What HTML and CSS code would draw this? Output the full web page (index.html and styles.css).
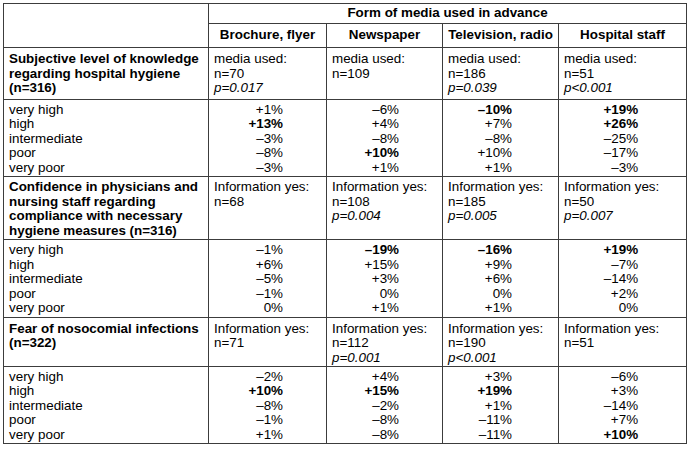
FILE: index.html
```html
<!DOCTYPE html>
<html lang="en">
<head>
<meta charset="utf-8">
<title>Form of media used in advance</title>
<link rel="stylesheet" href="styles.css">
</head>
<body>
<table class="grid">
  <colgroup>
    <col class="col-label">
    <col class="col-a">
    <col class="col-b">
    <col class="col-c">
    <col class="col-d">
  </colgroup>
  <thead>
    <tr class="head-1">
      <th rowspan="2" class="corner"></th>
      <th colspan="4" class="group">Form of media used in advance</th>
    </tr>
    <tr class="head-2">
      <th>Brochure, flyer</th>
      <th>Newspaper</th>
      <th>Television, radio</th>
      <th>Hospital staff</th>
    </tr>
  </thead>
  <tbody>
    <tr class="sec sec-1">
      <th class="q">Subjective level of knowledge<br>regarding hospital hygiene<br>(n=316)</th>
      <td>media used:<br>n=70<br><i>p=0.017</i></td>
      <td>media used:<br>n=109</td>
      <td>media used:<br>n=186<br><i>p=0.039</i></td>
      <td>media used:<br>n=51<br><i>p&lt;0.001</i></td>
    </tr>
    <tr class="data">
      <td class="lbl">very high<br>high<br>intermediate<br>poor<br>very poor</td>
      <td class="val">+1%<br><b>+13%</b><br>–3%<br>–8%<br>–3%</td>
      <td class="val">–6%<br>+4%<br>–8%<br><b>+10%</b><br>+1%</td>
      <td class="val"><b>–10%</b><br>+7%<br>–8%<br>+10%<br>+1%</td>
      <td class="val"><b>+19%</b><br><b>+26%</b><br>–25%<br>–17%<br>–3%</td>
    </tr>
    <tr class="sec sec-2">
      <th class="q">Confidence in physicians and<br>nursing staff regarding<br>compliance with necessary<br>hygiene measures (n=316)</th>
      <td>Information yes:<br>n=68</td>
      <td>Information yes:<br>n=108<br><i>p=0.004</i></td>
      <td>Information yes:<br>n=185<br><i>p=0.005</i></td>
      <td>Information yes:<br>n=50<br><i>p=0.007</i></td>
    </tr>
    <tr class="data data-2">
      <td class="lbl">very high<br>high<br>intermediate<br>poor<br>very poor</td>
      <td class="val">–1%<br>+6%<br>–5%<br>–1%<br>0%</td>
      <td class="val"><b>–19%</b><br>+15%<br>+3%<br>0%<br>+1%</td>
      <td class="val"><b>–16%</b><br>+9%<br>+6%<br>0%<br>+1%</td>
      <td class="val"><b>+19%</b><br>–7%<br>–14%<br>+2%<br>0%</td>
    </tr>
    <tr class="sec sec-3">
      <th class="q">Fear of nosocomial infections<br>(n=322)</th>
      <td>Information yes:<br>n=71</td>
      <td>Information yes:<br>n=112<br><i>p=0.001</i></td>
      <td>Information yes:<br>n=190<br><i>p&lt;0.001</i></td>
      <td>Information yes:<br>n=51</td>
    </tr>
    <tr class="data">
      <td class="lbl">very high<br>high<br>intermediate<br>poor<br>very poor</td>
      <td class="val">–2%<br><b>+10%</b><br>–8%<br>–1%<br>+1%</td>
      <td class="val">+4%<br><b>+15%</b><br>–2%<br>–8%<br>–8%</td>
      <td class="val">+3%<br><b>+19%</b><br>+1%<br>–11%<br>–11%</td>
      <td class="val">–6%<br>+3%<br>–14%<br>+7%<br><b>+10%</b></td>
    </tr>
  </tbody>
</table>
</body>
</html>
```

FILE: styles.css
```css
html, body {
  margin: 0;
  padding: 0;
  background: #ffffff;
}

body {
  padding: 3px 0 0 3px;
  font-family: "Liberation Sans", Arial, sans-serif;
  font-size: 13.4px;
  line-height: 14.5px;
  color: #000000;
}

.grid {
  border-collapse: collapse;
  table-layout: fixed;
  width: 684px;
}

.col-label { width: 205px; }
.col-a { width: 118px; }
.col-b { width: 116px; }
.col-c { width: 116px; }
.col-d { width: 128px; }

.grid th,
.grid td {
  border: 1px solid #3c3c3c;
  padding: 0 5px;
  vertical-align: top;
  text-align: left;
  font-weight: normal;
}

.head-1 th {
  height: 19px;
  vertical-align: middle;
  text-align: center;
  font-weight: bold;
  padding: 0;
}

.head-2 th {
  height: 23px;
  vertical-align: middle;
  text-align: center;
  font-weight: bold;
  padding: 0;
}

.grid .corner {
  padding: 0;
}

.sec th,
.sec td {
  padding-top: 3px;
  padding-bottom: 1px;
}

.sec .q {
  font-weight: bold;
}

.sec-1 th, .sec-1 td {
  padding-top: 4px;
  height: 46px;
}

.sec-2 th, .sec-2 td { height: 58px; }

.sec-3 th, .sec-3 td {
  padding-top: 3.5px;
  height: 43.5px;
}

.data td {
  padding-top: 2.5px;
  padding-bottom: 1px;
}

.data-2 td {
  padding-top: 3px;
  padding-bottom: 1.5px;
}

.data .val {
  text-align: right;
}

.data .val:nth-child(2) { padding-right: 43px; }
.data .val:nth-child(3) { padding-right: 43px; }
.data .val:nth-child(4) { padding-right: 46px; }
.data .val:nth-child(5) { padding-right: 48px; }

.data .val b {
  font-weight: bold;
}
```
